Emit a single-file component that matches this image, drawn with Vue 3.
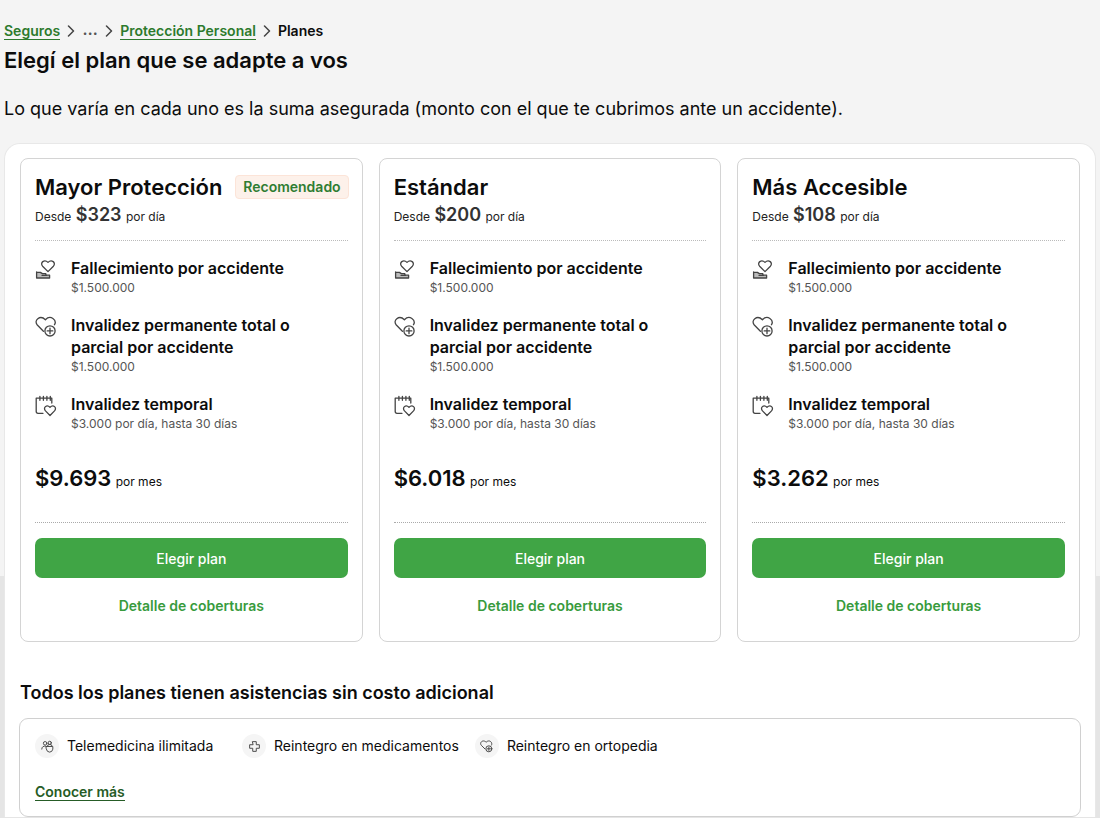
<script setup>
const coverages = [
  { icon: 'hand', title: 'Fallecimiento por accidente', detail: '$1.500.000' },
  { icon: 'heart', title: 'Invalidez permanente total o parcial por accidente', detail: '$1.500.000' },
  { icon: 'calendar', title: 'Invalidez temporal', detail: '$3.000 por día, hasta 30 días' },
]
const plans = [
  { name: 'Mayor Protección', badge: 'Recomendado', daily: '$323', monthly: '$9.693' },
  { name: 'Estándar', daily: '$200', monthly: '$6.018' },
  { name: 'Más Accesible', daily: '$108', monthly: '$3.262' },
]
const benefits = [
  { icon: 'people', label: 'Telemedicina ilimitada' },
  { icon: 'cross', label: 'Reintegro en medicamentos' },
  { icon: 'heart', label: 'Reintegro en ortopedia' },
]
</script>

<template>
  <main class="page">
    <svg class="defs" aria-hidden="true">
      <symbol id="hand" viewBox="0 0 22 22">
        <path d="M13 12.6 7.6 7.2C4.6 3.7 9.4-.2 13 3.4c3.6-3.6 8.4.3 5.4 3.8Z" />
        <path d="M1.6 12.8v6.2H14.6v-2.8H10.8V14.6H7.4L5.4 13.4H1.6" fill="#bbb" />
        <path d="M7 16.3h4.5" />
      </symbol>
      <symbol id="heart" viewBox="0 0 22 22">
        <path d="M8.4 15.2 2.3 9C-1.7 4.5 5-1.6 10.4 3.7c5.2-5.3 11.8.4 9.1 5" />
        <circle cx="15" cy="14.9" r="5.1" />
        <path d="M15 12.1v5.6M12.2 14.9h5.6" />
      </symbol>
      <symbol id="calendar" viewBox="0 0 22 22">
        <path d="M8 18.3H3Q1.2 18.3 1.2 16.5V3.2H16.8V8M4.9 1.3v4M8.4 1.3v4M11.9 1.3v4M15.3 1.3v4" />
        <path d="m15 20.5-4.5-4.6c-2.9-3.2 1.2-7 4.5-3.6 3.3-3.4 7.4.4 4.5 3.6Z" />
      </symbol>
      <symbol id="people" viewBox="0 0 22 22">
        <circle cx="7" cy="5.6" r="3" />
        <path d="M1.3 15.4C1.5 11.3 4 10 8 10.3" />
        <circle cx="14.8" cy="4.8" r="2.7" />
        <path d="M11.4 10V8.5q3.5-2 6.8 0V10M9 11h11v4.5q-1 5-5.5 5T9 15.5Z" />
      </symbol>
      <symbol id="cross" viewBox="0 0 22 22">
        <path d="M8 2.8h6V8h5.2v6H14v5.2H8V14H2.8V8H8Z" />
      </symbol>
      <symbol id="chevron" viewBox="0 0 8 12">
        <path d="m1.5 1 5 5-5 5" />
      </symbol>
    </svg>

    <header class="header">
      <nav class="breadcrumb" aria-label="Ruta de navegación">
        <a href="#">Seguros</a>
        <svg class="chevron" aria-hidden="true"><use href="#chevron" /></svg>
        <span class="dots">…</span>
        <svg class="chevron" aria-hidden="true"><use href="#chevron" /></svg>
        <a href="#">Protección Personal</a>
        <svg class="chevron" aria-hidden="true"><use href="#chevron" /></svg>
        <span aria-current="page">Planes</span>
      </nav>
      <h1>Elegí el plan que se adapte a vos</h1>
      <p class="intro">Lo que varía en cada uno es la suma asegurada (monto con el que te cubrimos ante un accidente).</p>
    </header>

    <section class="panel">
      <div class="plans">
        <article v-for="plan in plans" :key="plan.name" class="plan">
          <div class="plan-head">
            <h2>{{ plan.name }}</h2>
            <span v-if="plan.badge" class="badge">{{ plan.badge }}</span>
          </div>
          <p class="daily">Desde <strong>{{ plan.daily }}</strong> por día</p>
          <ul class="coverages">
            <li v-for="item in coverages" :key="item.title">
              <svg class="icon" aria-hidden="true"><use :href="'#' + item.icon" /></svg>
              <div>
                <h3>{{ item.title }}</h3>
                <p>{{ item.detail }}</p>
              </div>
            </li>
          </ul>
          <p class="monthly"><strong>{{ plan.monthly }}</strong> por mes</p>
          <div class="actions">
            <button type="button" class="choose">Elegir plan</button>
            <a href="#" class="details">Detalle de coberturas</a>
          </div>
        </article>
      </div>

      <h2 class="subtitle">Todos los planes tienen asistencias sin costo adicional</h2>
      <div class="benefits">
        <ul>
          <li v-for="benefit in benefits" :key="benefit.label">
            <span class="bubble">
              <svg aria-hidden="true"><use :href="'#' + benefit.icon" /></svg>
            </span>
            {{ benefit.label }}
          </li>
        </ul>
        <a href="#" class="more">Conocer más</a>
      </div>
    </section>
  </main>
</template>

<style>
body {
  background: linear-gradient(#f4f4f4 576px, #e5e5e5 576px) no-repeat #e5e5e5;
}
</style>

<style scoped>
.page {
  padding: 21px 4px 0;
  font-family: Inter, "Liberation Sans", sans-serif;
  color: #0c0c0c;
}
h1, h2, h3, p, ul {
  margin: 0;
  padding: 0;
}
ul {
  list-style: none;
}
svg {
  fill: none;
  stroke: #444;
  stroke-width: 1.3;
  stroke-linejoin: round;
  stroke-linecap: round;
}
.defs {
  position: absolute;
  width: 0;
  height: 0;
}
.breadcrumb {
  display: flex;
  align-items: center;
  gap: 7px;
  font-size: 14px;
  font-weight: 600;
  line-height: 20px;
}
.breadcrumb a {
  color: #2d7a2d;
  line-height: 17px;
  text-decoration: none;
  border-bottom: 1px solid #2d7a2d;
}
.chevron {
  width: 8px;
  height: 12px;
  stroke-width: 1.5;
}
.dots {
  align-self: flex-start;
  width: 16px;
  text-align: center;
  font-size: 16px;
  line-height: 16px;
  color: #555;
}
h1 {
  font-size: 22px;
  font-weight: 600;
  line-height: 38px;
}
.intro {
  margin-top: 18px;
  font-size: 18px;
  line-height: 24px;
}
.panel {
  margin-top: 22px;
  padding: 14px 15px;
  border: 1px solid #e8e8e8;
  border-bottom: 0;
  border-radius: 16px 16px 0 0;
  background: #fff;
}
.plans {
  display: grid;
  grid-template-columns: repeat(3, minmax(0, 1fr));
  gap: 16px;
}
.plan {
  padding: 14px 14px 23px;
  border: 1px solid #d4d4d4;
  border-radius: 8px;
}
.plan-head {
  display: flex;
  justify-content: space-between;
  align-items: center;
  height: 28px;
  margin-right: -1px;
  white-space: nowrap;
}
.plan-head h2 {
  font-size: 22px;
  font-weight: 600;
  line-height: 28px;
}
.badge {
  padding: 0 7px;
  border: 1px solid #fce4d8;
  border-radius: 4px;
  background: #fdf1ea;
  color: #2f7d32;
  font-size: 14px;
  font-weight: 600;
  line-height: 22px;
}
.daily {
  padding-bottom: 9px;
  border-bottom: 1px dotted #bbb;
  font-size: 12px;
  line-height: 28px;
  color: #222;
}
.daily strong {
  margin: 0 1px;
  font-size: 18px;
  font-weight: 600;
  color: #333;
}
.coverages {
  display: grid;
  gap: 17px;
  padding: 16px 32px 0 0;
}
.coverages li {
  display: flex;
  gap: 14px;
}
.icon {
  flex: none;
  width: 22px;
  height: 22px;
  margin-top: 2px;
}
.coverages h3 {
  font-size: 16px;
  font-weight: 600;
  line-height: 22px;
}
.coverages p {
  font-size: 12px;
  line-height: 18px;
  color: #555;
}
.monthly {
  padding: 27px 0 22px;
  border-bottom: 1px dotted #aaa;
  font-size: 12px;
  line-height: 36px;
}
.monthly strong {
  margin-right: 1px;
  font-size: 22px;
  font-weight: 600;
}
.actions {
  display: grid;
  gap: 16px;
  padding-top: 15px;
}
.choose {
  height: 40px;
  border: 0;
  border-radius: 7px;
  background: #40a545;
  color: #fff;
  font-family: inherit;
  font-size: 14px;
  font-weight: 500;
}
.details {
  justify-self: center;
  color: #389b3d;
  font-size: 14px;
  font-weight: 600;
  line-height: 24px;
  text-decoration: none;
}
.subtitle {
  margin: 39px 0 13px;
  font-size: 18px;
  font-weight: 600;
  line-height: 24px;
}
.benefits {
  margin: 0 -1px -14px;
  padding: 15px;
  border: 1px solid #d0d0d0;
  border-radius: 9px;
}
.benefits ul {
  display: flex;
  flex-wrap: wrap;
  gap: 8px 16px;
}
.benefits li {
  display: flex;
  align-items: center;
  gap: 8px;
  min-width: 191px;
  font-size: 14px;
  line-height: 24px;
}
.bubble {
  display: grid;
  place-items: center;
  width: 24px;
  height: 24px;
  border-radius: 50%;
  background: #f5f5f5;
}
.bubble svg {
  width: 13px;
  height: 13px;
  stroke-width: 1.6;
}
.more {
  display: inline-block;
  margin-top: 25px;
  border-bottom: 1px solid #265c26;
  color: #265c26;
  font-size: 14px;
  font-weight: 600;
  line-height: 17px;
  text-decoration: none;
}
</style>
